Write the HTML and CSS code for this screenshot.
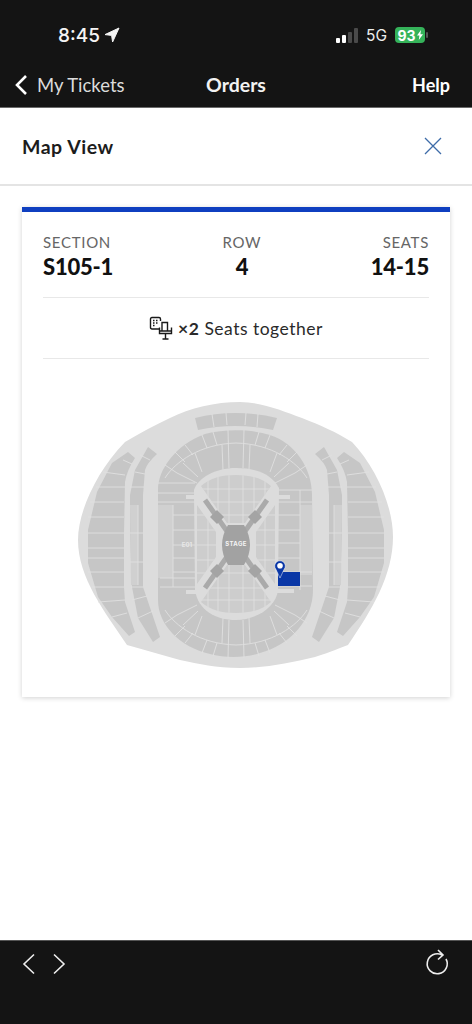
FILE: index.html

```html
<!DOCTYPE html>
<html>
	<head>
		<title>Map View</title>
		<meta charset="UTF-8">
		<link rel="stylesheet" href="styles.css">
	</head>
	<body>
		<div class="topbar">
			<div class="status">
				<div class="clock">
					8:45
					<svg class="arrow" width="16" height="16" viewBox="0 0 16 16"><path d="M15 1 L1 7.600 L7.600 8.400 L8.600 15 Z"/></svg>
				</div>
				<div class="signal">
					<span class="bars"><i class="b1"></i><i class="b2"></i><i class="b3"></i><i class="b4"></i></span>
					<span class="net">5G</span>
					<span class="battery">93<svg width="6" height="10" viewBox="0 0 6 10"><path d="M4 0 L0 5.600 H2.400 L1.800 10 L6 4.200 H3.400 Z"/></svg></span>
					<span class="nub"></span>
				</div>
			</div>
			<div class="nav">
				<div class="back">
					<svg width="14" height="22" viewBox="0 0 14 22"><path d="M12 2 L3 11 L12 20"/></svg>
					My Tickets
				</div>
				<div class="title">Orders</div>
				<div class="help">Help</div>
			</div>
		</div>

		<div class="head">
			<h1>Map View</h1>
			<svg width="18" height="18" viewBox="0 0 18 18"><path d="M1 1 L17 17 M17 1 L1 17"/></svg>
		</div>

		<div class="main">
			<div class="card">
				<div class="seatinfo">
					<div class="col">
						<div class="lab">SECTION</div>
						<div class="val">S105-1</div>
					</div>
					<div class="col mid">
						<div class="lab">ROW</div>
						<div class="val">4</div>
					</div>
					<div class="col end">
						<div class="lab">SEATS</div>
						<div class="val">14-15</div>
					</div>
				</div>
				<div class="together">
					<svg width="24" height="24" viewBox="0 0 24 24">
						<path d="M11 13 H3 Q1.500 13 1.500 11.500 V3 Q1.500 1.500 3 1.500 H10 Q11.500 1.500 11.500 3 V5"/>
						<path d="M4 4.500 h1.500 M7 4.500 h1.500 M4 7 h1.500 M7 7 h1.500 M4 9.500 h1.500"/>
						<path d="M13 15 V6.500 H18.500 V15 M10.500 11.500 V17.500 H22.500 V11.500 M10.500 15 H22.500 M16.500 17.500 V23 M13.500 23 H19.500"/>
					</svg>
					<b>×2</b> Seats together
				</div>
				<svg class="map" width="340" height="280" viewBox="66 395 340 280">
					<defs>
						<g id="band">
							<path class="seat" d="M128,452 L135,458 Q127,470 125,482 L124,535 L124,587 L125,602 L135,632 L129,636 L112,617 L98,597 L88,563 L88,530 L97,492 L112,463 Z"/>
							<path class="seat" d="M148,447 L157,454 Q147,463 145,470 L143,495 L143,587 L160,637 L153,642 L138,618 L132,587 L130,530 L130,495 L135,470 Z"/>
							<path class="strip" d="M130,505 H138 V585 H131 Z"/>
							<path class="line" d="M123,460 L132,464 M103,472 L125,475 M96,487 L125,487 M90,502 L124,502 M88,517 L124,517 M88,533 L124,533 M88,548 L124,548 M88,558 L124,558 M88,572 L124,572 M92,587 L124,587 M98,602 L125,600 M112,617 L127,613"/>
							<path class="line" d="M140,455 L150,460 M135,472 L145,474 M130,487 L144,487 M131,587 L143,587 M132,600 L147,596 M138,618 L153,611"/>
							<path class="line" d="M138,505 V585 M130,533 H143 M130,562 H143"/>
						</g>
						<g id="wedge">
							<path class="line" d="M165,478 C175,462 200,444 236,443"/>
							<path class="line" d="M213,432 L217,445 M202,435 L207,448 M185,445 L193,455 M175,452 L185,462 M165,465 L177,473"/>
							<path class="line" d="M195,453 L202,472 M183,463 L198,477 M177,473 L197,483 M222,445 L223,470 M228,430 L229,468"/>
						</g>
						<g id="truss">
							<path class="truss" d="M205,500 L236,544"/>
							<path class="block" d="M217,510 L224,517 L217,524 L210,517 Z"/>
						</g>
						<clipPath id="quads">
							<path d="M201,486 C210,478 222,475 236,475 C250,475 262,478 271,486 L245,523 H227 Z"/>
							<path d="M201,602 C210,610 222,613 236,613 C250,613 262,610 271,602 L245,565 H227 Z"/>
							<path d="M197,505 L216,532 V557 L197,584 Z"/>
							<path d="M275,505 L256,532 V557 L275,584 Z"/>
						</clipPath>
					</defs>
					<path class="outer" d="M78,540 C78,512 96,472 125,442 C140,433 155,425 170,418 C190,408 215,402 240,402 C262,402 283,411 302,418 C320,425 336,432 352,442 C375,466 393,505 393,537 C393,575 372,610 348,645 C335,650 325,654 315,657 C290,663 265,668 240,668 C215,668 200,664 180,660 C162,655 145,650 127,645 C105,612 78,578 78,540 Z"/>
					<use href="#band"/>
					<use href="#band" transform="translate(472 0) scale(-1 1)"/>

					<path class="seat" d="M195,418 Q235,408 277,418 L273,430 Q235,422 198,430 Z"/>
					<path class="line" d="M212,414 L214,427 M226,413 L227,425 M246,413 L245,425 M258,414 L257,427"/>

					<path class="seat" d="M158,600 L158,490 C158,470 175,445 205,434 C225,429 250,429 270,435 C295,443 312,468 312,495 L313,590 C313,620 290,645 260,653 C245,658 225,658 210,654 C180,647 158,625 158,600 Z"/>
					<path class="strip" d="M300,505 H312 V575 H300 Z M158,505 H173 V578 H158 Z"/>
					<use href="#wedge"/>
					<use href="#wedge" transform="translate(472 0) scale(-1 1)"/>
					<use href="#wedge" transform="translate(0 1088) scale(1 -1)"/>
					<use href="#wedge" transform="translate(472 1088) scale(-1 -1)"/>
					<path class="line" d="M158,483 H195 M158,493 H195 M158,502 H195 M173,515 H195 M173,530 H195 M173,545 H195 M173,558 H195 M173,572 H195 M160,578 H195 M160,587 H195 M173,505 V587"/>
					<path class="line" d="M278,490 H312 M278,502 H312 M278,515 H300 M278,530 H300 M278,543 H300 M278,558 H300 M278,572 H312 M278,586 H312 M300,490 V590"/>

					<path class="outer" d="M194,490 C198,478 215,468 236,468 C258,468 272,475 279,488 L278,590 C276,608 255,620 236,620 C215,620 198,610 195,590 Z"/>
					<path class="outer" d="M186,495 H202 V499 H186 Z M276,495 H290 V499 H276 Z M186,590 H202 V594 H186 Z M276,589 H294 V593 H276 Z"/>

					<g clip-path="url(#quads)">
						<rect class="field" x="190" y="470" width="92" height="150"/>
						<path class="line" d="M208,470 V620 M218,470 V620 M229,470 V620 M243,470 V620 M254,470 V620 M265,470 V620"/>
						<path class="line" d="M190,489 H282 M190,502 H282 M190,515 H282 M190,530 H282 M190,545 H282 M190,560 H282 M190,573 H282 M190,588 H282 M190,600 H282"/>
					</g>

					<use href="#truss"/>
					<use href="#truss" transform="translate(472 0) scale(-1 1)"/>
					<use href="#truss" transform="translate(0 1088) scale(1 -1)"/>
					<use href="#truss" transform="translate(472 1088) scale(-1 -1)"/>
					<path class="stage" d="M228,525 H244 Q250,535 250,545 Q250,555 244,565 H228 Q222,555 222,545 Q222,535 228,525 Z"/>
					<text class="stagetxt" x="236" y="546">STAGE</text>
					<text class="gate" x="187" y="547">E01</text>

					<rect class="pick" x="278" y="572" width="22" height="14"/>
					<path class="pin" d="M280,578 L276,569.500 A5.300,5.300 0 1 1 284,569.500 Z"/>
					<circle class="pinhole" cx="280" cy="565.800" r="2.800"/>
				</svg>
			</div>
		</div>

		<div class="toolbar">
			<svg width="14" height="22" viewBox="0 0 14 22"><path d="M12 1.500 L2 11 L12 20.500"/></svg>
			<svg class="next" width="14" height="22" viewBox="0 0 14 22"><path d="M2 1.500 L12 11 L2 20.500"/></svg>
			<svg class="reload" width="24" height="30" viewBox="0 0 24 30"><path d="M11 2 L16 7 L11 11.500 M15 7 A10 10 0 1 0 19 11"/></svg>
		</div>
	</body>
</html>
```

FILE: styles.css

```css
/* common */
html, body {
	margin: 0; padding: 0; background-color: white;
}
body {
	width: 472px; height: 1024px; display: flex; flex-direction: column; font-family: "Lato", sans-serif; color: #1a1a1a; overflow: hidden;
}
svg {
	display: block; flex: none;
}
/* top */
.topbar {
	background-color: #141414; color: white; height: 107px; border-bottom: 1px solid #6a6a6a; flex: none;
}
.status {
	height: 62px; display: flex; justify-content: space-between; align-items: center; padding: 8px 0 0 58px; box-sizing: border-box;
}
.clock {
	display: flex; align-items: center; gap: 4px; font: 500 19px "Inter", sans-serif; color: #f4f4f4;
}
.arrow path {
	fill: #f4f4f4; stroke: #f4f4f4; stroke-width: 1; stroke-linejoin: round;
}
.signal {
	display: flex; align-items: center; padding-right: 44px;
}
.bars {
	display: flex; align-items: flex-end; gap: 2px; height: 15px; margin-right: 8px;
}
.bars i {
	display: block; width: 4px; background-color: #4a4a4a; border-radius: 1px;
}
.bars .b1 {
	height: 5px; background-color: white;
}
.bars .b2 {
	height: 8px; background-color: white;
}
.bars .b3 {
	height: 11px;
}
.bars .b4 {
	height: 15px;
}
.net {
	font: 400 15.500px "Inter", sans-serif; color: #eee; margin-right: 8px;
}
.battery {
	display: flex; align-items: center; justify-content: center; gap: 1px; width: 30px; height: 16px; background-color: #35b35a; border-radius: 4px; color: white; font: 700 14px "Inter", sans-serif;
}
.battery path {
	fill: white;
}
.nub {
	width: 2px; height: 6px; background-color: #555; margin-left: 1px; border-radius: 1px;
}
.nav {
	height: 45px; display: grid; grid-template-columns: 1fr auto 1fr; align-items: center; padding: 0 14px; font-size: 18.500px;
}
.back {
	display: flex; align-items: center; gap: 9px; color: #dcdcdc;
}
.back path {
	fill: none; stroke: white; stroke-width: 2.600;
}
.title {
	font-size: 19.500px; font-weight: 700; color: #f2f2f2;
}
.help {
	text-align: right; font-size: 18px; font-weight: 700; padding-right: 8px;
}
/* header */
.head {
	height: 78px; box-sizing: border-box; display: flex; justify-content: space-between; align-items: center; padding: 0 30px 0 22px; border-bottom: 2px solid #e4e4e4; flex: none;
}
h1 {
	margin: 0; font-size: 19.500px; font-weight: 700; letter-spacing: 0.500px; color: #1c1c1c;
}
.head path {
	fill: none; stroke: #3e6ca8; stroke-width: 1.300;
}
/* card */
.main {
	flex: 1; padding: 21px 22px 0;
}
.card {
	border-top: 5px solid #0f3fc0; box-shadow: 0 1px 5px rgba(0, 0, 0, 0.180); padding: 0 21px 22px;
}
.seatinfo {
	display: flex; justify-content: space-between; padding: 20px 0 15px; border-bottom: 1px solid #e8e8e8;
}
.col.mid {
	text-align: center;
}
.col.end {
	text-align: right;
}
.lab {
	font-size: 15px; line-height: 20px; letter-spacing: 0.700px; color: #666;
}
.val {
	font-size: 22px; line-height: 30px; font-weight: 900; letter-spacing: -0.200px; color: #111;
}
.together {
	height: 60px; display: flex; justify-content: center; align-items: center; gap: 5px; font-size: 17.500px; letter-spacing: 0.500px; color: #2a2a2a; border-bottom: 1px solid #e8e8e8;
}
.together svg {
	margin-top: -1px; fill: none; stroke: #1a1a1a; stroke-width: 1.400;
}
/* map */
.map {
	margin: 36px auto 0;
}
.outer {
	fill: #dcdcdc;
}
.seat {
	fill: #c6c6c6;
}
.strip {
	fill: #d0d0d0;
}
.field {
	fill: #cdcdcd;
}
.line {
	fill: none; stroke: #e0e0e0; stroke-width: 0.900;
}
.truss {
	fill: none; stroke: #aaa; stroke-width: 5;
}
.block {
	fill: #a4a4a4;
}
.stage {
	fill: #a2a2a2;
}
.stagetxt {
	font: 700 6px "Inter", sans-serif; letter-spacing: 0.300px; fill: #f4f4f4; text-anchor: middle;
}
.gate {
	font: 700 6px "Inter", sans-serif; fill: #e8e8e8; text-anchor: middle;
}
.pick {
	fill: #0a37a6;
}
.pin {
	fill: #0a37a6; stroke: white; stroke-width: 0.500;
}
.pinhole {
	fill: white;
}
/* bottom */
.toolbar {
	height: 84px; box-sizing: border-box; background-color: #141414; border-top: 1px solid #555; display: flex; align-items: flex-start; padding: 12px 21px 0 22px; flex: none;
}
.toolbar path {
	fill: none; stroke: #eee; stroke-width: 1.600;
}
.next {
	margin-left: 16px;
}
.reload {
	margin: -5px 0 0 auto; overflow: visible;
}
```
